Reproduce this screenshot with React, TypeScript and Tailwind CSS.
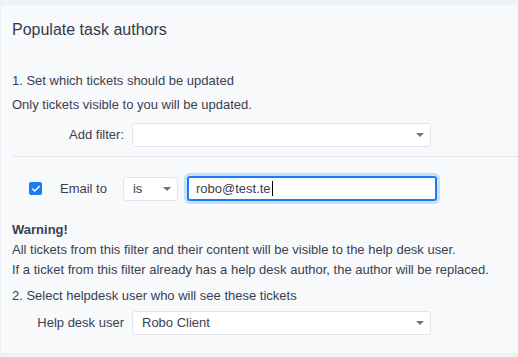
import { Check } from "lucide-react"

function Caret() {
  return (
    <svg width="8" height="4" viewBox="0 0 8 4" className="shrink-0">
      <path d="M0 0h8L4 4z" fill="#6b7280" />
    </svg>
  )
}

function Select({ value, className }: { value?: string; className?: string }) {
  return (
    <div
      className={`flex h-[24px] items-center justify-between rounded-[3px] border border-[#e1e5ec] bg-white pl-[9px] pr-[6px] ${className ?? ""}`}
    >
      <span>{value}</span>
      <Caret />
    </div>
  )
}

export default function App() {
  return (
    <div className="h-[357px] w-[518px] overflow-hidden bg-[#eef2f6] pt-[5px] pl-[1px] font-['Liberation_Sans',Arial,sans-serif] text-[13px] text-[#3a4052]">
      <div className="h-[348px] rounded-tl-[4px] bg-[#f8f9fb] pl-[11px]">
        <h1 className="pt-[15px] text-[16px] leading-[20px] text-[#343a4a]">Populate task authors</h1>

        <p className="mt-[31px] leading-[20px]">1. Set which tickets should be updated</p>
        <p className="mt-[4px] leading-[20px]">Only tickets visible to you will be updated.</p>

        <div className="mt-[8px] flex items-center">
          <span className="w-[112px] text-right">Add filter:</span>
          <Select className="ml-[8px] w-[299px]" />
        </div>

        <div className="mt-[9px] border-t border-[#e4e7ec]" />

        <div className="mt-[19px] flex items-center">
          <div className="ml-[17px] flex h-[13px] w-[13px] items-center justify-center rounded-[2px] bg-[#1a7cf0]">
            <Check size={10} strokeWidth={3.5} color="white" />
          </div>
          <span className="ml-[18px]">Email to</span>
          <Select value="is" className="ml-[16px] w-[55px]" />
          <div className="ml-[9px] flex h-[25px] w-[250px] items-center rounded-[3px] border-2 border-[#1a7cf0] bg-white pl-[7px] shadow-[0_0_0_3px_#c6e0fb]">
            robo@test.te<span className="ml-[1px] inline-block h-[15px] w-px bg-black" />
          </div>
        </div>

        <p className="mt-[19px] font-bold leading-[20px]">Warning!</p>
        <p className="leading-[20px]">All tickets from this filter and their content will be visible to the help desk user.</p>
        <p className="leading-[20px]">If a ticket from this filter already has a help desk author, the author will be replaced.</p>
        <p className="mt-[6px] leading-[20px]">2. Select helpdesk user who will see these tickets</p>

        <div className="mt-[5px] flex items-center">
          <span className="w-[112px] text-right">Help desk user</span>
          <Select value="Robo Client" className="ml-[8px] w-[299px]" />
        </div>
      </div>
    </div>
  )
}
